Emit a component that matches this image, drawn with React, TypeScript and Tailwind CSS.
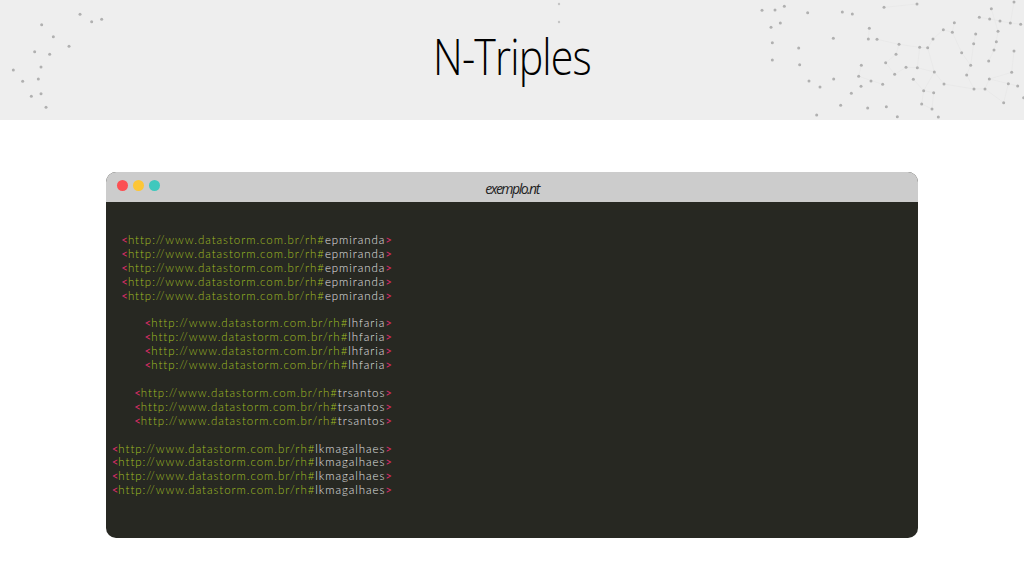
const rightDots: [number, number][] = [
  [54, 31], [93, 30], [121, 19], [191, 38], [295, 36], [325, 42], [420, 22], [519, 12], [109, 69], [81, 82],
  [376, 85], [85, 128], [268, 115], [373, 117], [399, 118], [164, 144], [465, 133], [527, 142], [551, 143], [567, 117],
  [598, 89], [631, 68], [625, 97], [706, 52], [737, 57], [768, 63], [799, 69], [830, 73], [742, 26], [810, 6],
  [695, 102], [762, 94], [689, 131], [757, 125], [750, 150], [653, 158], [810, 153], [456, 163], [85, 180], [167, 194],
  [425, 188], [352, 196], [486, 202], [520, 203], [680, 196], [734, 183], [452, 223], [344, 229], [571, 216], [668, 225],
  [803, 217], [508, 238], [195, 243], [269, 237], [381, 243], [736, 237], [228, 261], [351, 259], [416, 253], [600, 252],
  [793, 251], [821, 258], [690, 267], [723, 267], [539, 272], [569, 278], [322, 280], [839, 293], [533, 312], [779, 308],
  [290, 316], [371, 324], [427, 320], [564, 327], [218, 345], [460, 350], [583, 351],
];

const leftDots: [number, number][] = [
  [240, 43], [275, 65], [305, 58], [125, 74], [160, 110], [207, 139], [104, 155], [149, 163], [123, 201], [40, 210],
  [115, 237], [68, 244], [123, 281], [94, 289], [138, 322],
];

// pairs of indexes into rightDots for the faint mesh
const mesh: [number, number][] = [
  [23, 24], [24, 25], [25, 26], [26, 27], [30, 32], [31, 33], [33, 34], [32, 44], [34, 45], [44, 49],
  [21, 22], [20, 22], [19, 20], [16, 17], [17, 18], [19, 18], [37, 16], [37, 40], [40, 46], [46, 42],
  [42, 43], [43, 48], [48, 64], [64, 65], [65, 73], [51, 64], [17, 43], [18, 48], [35, 22], [35, 44],
  [59, 48], [59, 62], [62, 63], [63, 55], [55, 60], [60, 61], [50, 55], [36, 50], [69, 60], [69, 63],
  [49, 62], [28, 31], [29, 26], [68, 64], [68, 73], [41, 47], [47, 58], [14, 16], [6, 7], [10, 13],
];

const groups = [
  { user: "epmiranda", count: 5 },
  { user: "lhfaria", count: 4 },
  { user: "trsantos", count: 3 },
  { user: "lkmagalhaes", count: 4 },
];

function Network() {
  return (
    <svg viewBox="0 0 1024 120" className="h-full w-full">
      {mesh.map(([a, b], i) => (
        <line
          key={i}
          x1={744 + rightDots[a][0] / 3}
          y1={rightDots[a][1] / 3}
          x2={744 + rightDots[b][0] / 3}
          y2={rightDots[b][1] / 3}
          stroke="#e6e6e6"
          strokeWidth="0.6"
        />
      ))}
      {rightDots.map(([x, y], i) => (
        <circle key={i} cx={744 + x / 3} cy={y / 3} r="1.5" fill="#b0b0b0" />
      ))}
      {leftDots.map(([x, y], i) => (
        <circle key={i} cx={x / 3} cy={y / 3} r="1.5" fill="#b0b0b0" />
      ))}
      <circle cx="559" cy="4" r="1.2" fill="#c4c4c4" />
      <circle cx="559" cy="22" r="1.2" fill="#c4c4c4" />
    </svg>
  );
}

export default function App() {
  return (
    <div className="h-[576px] w-[1024px] overflow-hidden bg-white font-['Lato',sans-serif]">
      <header className="relative flex h-[120px] items-center justify-center bg-[#eeeeee]">
        <div className="absolute inset-0">
          <Network />
        </div>
        <h1 className="relative mb-[7px] origin-center scale-x-[0.84] font-['Open_Sans',sans-serif] text-[49px] font-light leading-none tracking-[-1px] text-black">
          N-Triples
        </h1>
      </header>

      <section className="mx-[106px] mt-[52px] h-[366px] overflow-hidden rounded-[10px] bg-[#272822]">
        <div className="relative flex h-[30px] items-center justify-center bg-[#cccccc]">
          <div className="absolute left-[11px] top-[8px] flex gap-[5px]">
            <span className="h-[11px] w-[11px] rounded-full bg-[#fc5053]" />
            <span className="h-[11px] w-[11px] rounded-full bg-[#fdc636]" />
            <span className="h-[11px] w-[11px] rounded-full bg-[#3fc8bd]" />
          </div>
          <span className="mt-[4px] font-['Open_Sans',sans-serif] text-[14px] italic leading-none tracking-[-1.5px] text-[#222]">
            exemplo.nt
          </span>
        </div>

        <div className="flex w-[286px] flex-col items-end gap-[13.9px] pt-[31px] text-[11.5px] font-light leading-[13.9px] tracking-[0.95px]">
          {groups.map((g) => (
            <div key={g.user} className="flex flex-col items-end">
              {Array.from({ length: g.count }).map((_, i) => (
                <div key={i} className="whitespace-nowrap">
                  <span className="font-normal tracking-[0px] text-[#d92d66]">&lt;</span>
                  <span className="text-[#a0be24]">http://www.datastorm.com.br/rh#</span>
                  <span className="text-[#e2e2e2]">{g.user}</span>
                  <span className="font-normal tracking-[0px] text-[#d92d66]">&gt;</span>
                </div>
              ))}
            </div>
          ))}
        </div>
      </section>
    </div>
  );
}
